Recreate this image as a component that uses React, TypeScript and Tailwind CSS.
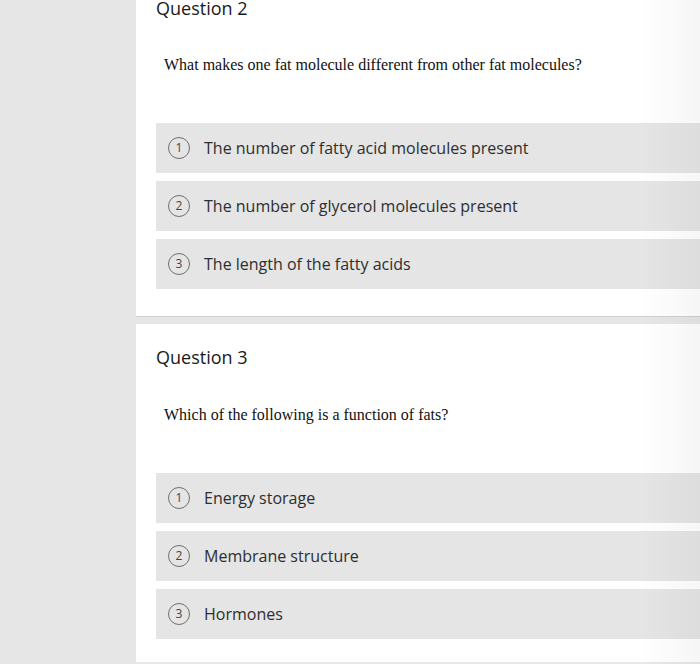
import React from "react";

type Q = { title: string; text: string; options: string[] };

const questions: Q[] = [
  {
    title: "Question 2",
    text: "What makes one fat molecule different from other fat molecules?",
    options: [
      "The number of fatty acid molecules present",
      "The number of glycerol molecules present",
      "The length of the fatty acids",
    ],
  },
  {
    title: "Question 3",
    text: "Which of the following is a function of fats?",
    options: ["Energy storage", "Membrane structure", "Hormones"],
  },
];

function Card({ q, first }: { q: Q; first: boolean }) {
  return (
    <div
      className={
        "bg-white pl-5 pt-[21px] " +
        (first ? "pb-[27px] border-b border-[#cfcfcf]" : "pb-[23px] border-b border-[#e8e8e8]")
      }
    >
      <div className="text-[18px] leading-[24px] text-[#1a1a1a] [font-family:'Open_Sans',sans-serif]">
        {q.title}
      </div>
      <div
        className={
          "pl-2 text-[16px] leading-[24px] text-[#111] [font-family:'Liberation_Serif',serif] " +
          (first ? "mt-[33px]" : "mt-[34px]")
        }
      >
        {q.text}
      </div>
      <div className="mt-[46px] flex flex-col gap-2">
        {q.options.map((o, i) => (
          <div
            key={i}
            className="h-[50px] bg-[#e5e5e5] flex items-center pl-3 gap-[14px] [font-family:'Open_Sans',sans-serif]"
          >
            <div className="w-[22px] h-[22px] rounded-full border-[1.5px] border-[#707070] flex items-center justify-center text-[12px] leading-none text-[#444]">
              {i + 1}
            </div>
            <div className="text-[16px] text-[#2e2e2e]">{o}</div>
          </div>
        ))}
      </div>
    </div>
  );
}

export default function App() {
  return (
    <div className="w-[700px] h-[664px] overflow-hidden bg-[#e6e6e6] flex relative">
      <div className="w-[136px] shrink-0 bg-[#e6e6e6]" />
      <div className="flex-1 flex flex-col gap-[7px] mt-[-25px]">
        {questions.map((q, i) => (
          <Card key={i} q={q} first={i === 0} />
        ))}
      </div>
      <div className="pointer-events-none absolute top-0 right-0 h-full w-[60px] bg-gradient-to-r from-transparent to-[rgba(0,0,0,0.035)]" />
    </div>
  );
}
